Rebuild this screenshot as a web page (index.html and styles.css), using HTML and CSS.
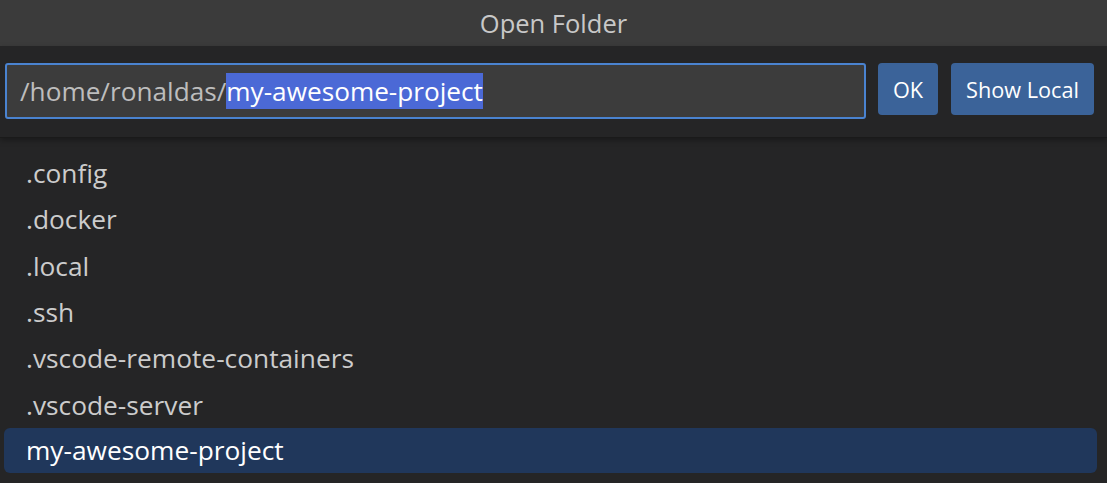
FILE: index.html
```html
<!DOCTYPE html>
<html>
<head>
<meta charset="utf-8">
<link rel="stylesheet" href="styles.css">
</head>
<body>
<div class="dialog">
  <div class="title">Open Folder</div>
  <div class="header">
    <div class="input"><span class="path">/home/ronaldas/</span><span class="sel">my-awesome-project</span></div>
    <button class="btn btn-ok">OK</button>
    <button class="btn btn-local">Show Local</button>
  </div>
  <div class="list">
    <div class="row">.config</div>
    <div class="row">.docker</div>
    <div class="row">.local</div>
    <div class="row">.ssh</div>
    <div class="row">.vscode-remote-containers</div>
    <div class="row">.vscode-server</div>
    <div class="row active">my-awesome-project</div>
  </div>
</div>
</body>
</html>
```
FILE: styles.css
```css
html, body {
  margin: 0;
  padding: 0;
  background: #252526;
  overflow: hidden;
}
.dialog {
  width: 1107px;
  height: 483px;
  font-family: "Open Sans", "Noto Sans", sans-serif;
  background: #252526;
  display: flex;
  flex-direction: column;
}
.title {
  height: 46px;
  background: #3b3b3b;
  color: #c8c8c8;
  font-size: 25.5px;
  display: flex;
  align-items: center;
  justify-content: center;
  flex: none;
}
.header {
  height: 91px;
  box-sizing: border-box;
  padding: 17px 13px 0 5px;
  display: flex;
  align-items: flex-start;
  gap: 12px;
  background: #252526;
  position: relative;
  z-index: 1;
  box-shadow: 0 1px 0 #1a1a1a, 0 3px 6px rgba(0,0,0,0.35);
  flex: none;
}
.input {
  width: 861px;
  height: 56px;
  box-sizing: border-box;
  border: 2px solid #4a83d0;
  border-radius: 3px;
  background: #3c3c3c;
  display: flex;
  align-items: center;
  padding-left: 13px;
  font-size: 26.2px;
  color: #bdbdbd;
  white-space: nowrap;
}
.sel {
  background: #4b69d6;
  color: #ffffff;
  line-height: 36px;
}
.btn {
  height: 52px;
  border: none;
  border-radius: 4px;
  background: #3b6399;
  color: #ffffff;
  font-family: inherit;
  font-size: 21.7px;
  padding: 0;
  cursor: pointer;
}
.btn-ok { width: 60px; }
.btn-local { width: 143px; margin-left: 1px; }
.list {
  padding: 13px 10px 0 4px;
  display: flex;
  flex-direction: column;
}
.row {
  height: 46.3px;
  display: flex;
  align-items: center;
  padding-left: 22px;
  font-size: 26.3px;
  color: #cccccc;
}
.row.active {
  background: #20375b;
  color: #ffffff;
  border-radius: 6px;
  height: 45px;
}
```
